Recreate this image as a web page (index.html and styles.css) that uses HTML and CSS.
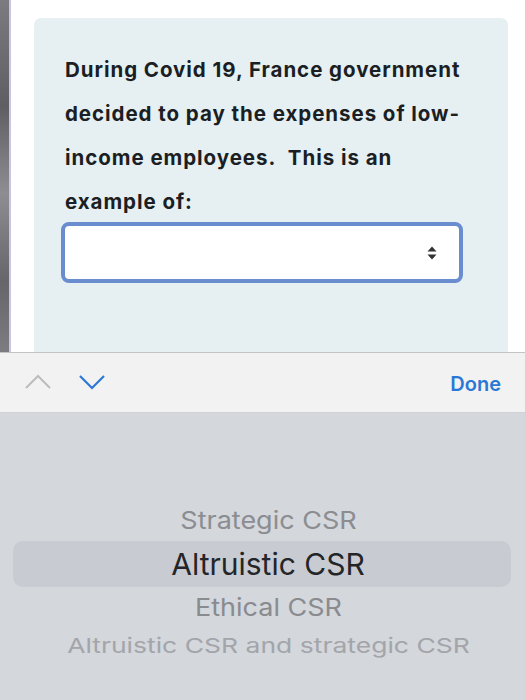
FILE: index.html
```html
<!DOCTYPE html>
<html>
<head>
<meta charset="utf-8">
<link rel="stylesheet" href="styles.css">
</head>
<body>
<div class="page">
  <div class="strip"></div>
  <div class="edge"></div>
  <div class="main">
    <div class="panel">
      <p class="question">During Covid 19, France government decided to pay the expenses of low-income employees.&nbsp; This is an example of:</p>
      <div class="select">
        <svg class="updown" width="10" height="14" viewBox="0 0 10 14"><path d="M5 0.5 L9.5 5.5 H0.5 Z M5 13.5 L9.5 8.5 H0.5 Z" fill="#333"/></svg>
      </div>
    </div>
  </div>
</div>
<div class="toolbar">
  <div class="arrows">
    <svg width="26" height="16" viewBox="0 0 26 16"><path d="M1 14 L13 2 L25 14" fill="none" stroke="#bcbcbc" stroke-width="2"/></svg>
    <svg width="26" height="16" viewBox="0 0 26 16"><path d="M1 2 L13 14 L25 2" fill="none" stroke="#2a78d6" stroke-width="2.2"/></svg>
  </div>
  <span class="done">Done</span>
</div>
<div class="picker">
  <div class="opt o1">Strategic CSR</div>
  <div class="opt sel">Altruistic CSR</div>
  <div class="opt o3">Ethical CSR</div>
  <div class="opt o4">Altruistic CSR and strategic CSR</div>
</div>
</body>
</html>
```
FILE: styles.css
```css
html, body {
  margin: 0;
  padding: 0;
  width: 525px;
  height: 700px;
  overflow: hidden;
  background: #fff;
  font-family: Inter, "Liberation Sans", Arial, sans-serif;
}
.page {
  display: flex;
  height: 352px;
  overflow: hidden;
}
.strip {
  width: 9px;
  background: linear-gradient(180deg, #7c7c80 0%, #5f5f63 30%, #8e8e92 55%, #66666a 80%, #7d7d81 100%);
}
.edge {
  width: 2px;
  background: #c9c6e2;
}
.main {
  flex: 1;
  padding: 18px 17px 0 23px;
}
.panel {
  background: #e6f0f3;
  border-radius: 7px 7px 0 0;
  height: 100%;
  padding: 30px 0 0 31px;
  box-sizing: border-box;
}
.question {
  margin: 0;
  width: 405px;
  font-size: 20.5px;
  letter-spacing: 0.95px;
  line-height: 44px;
  font-weight: 700;
  color: #1b1f24;
}
.select {
  margin-top: -2px;
  width: 402px;
  height: 61px;
  box-sizing: border-box;
  border: 4px solid #6a8dd0;
  border-radius: 8px;
  background: #fff;
  display: flex;
  align-items: center;
  justify-content: flex-end;
  padding-right: 22px;
  margin-left: -4px;
}
.toolbar {
  height: 61px;
  box-sizing: border-box;
  border-top: 1px solid #c4c4c6;
  border-bottom: 1px solid #cfd1d5;
  background: #f2f2f2;
  display: flex;
  align-items: center;
  justify-content: space-between;
  padding: 0 24px 0 25px;
}
.arrows {
  display: flex;
  gap: 28px;
  padding-bottom: 2px;
}
.done {
  color: #2a78d6;
  font-size: 20px;
  font-weight: 600;
  padding-top: 3px;
}
.picker {
  height: 287px;
  background: #d4d7dc;
  padding-top: 92px;
  box-sizing: border-box;
  display: flex;
  flex-direction: column;
  align-items: center;
}
.opt {
  text-align: center;
  white-space: nowrap;
  padding-left: 12px;
}
.o1 {
  font-size: 27px;
  line-height: 32px;
  color: #8b8d91;
  transform: scaleY(0.9);
}
.sel {
  align-self: stretch;
  margin: 4px 14px 0 13px;
  height: 46px;
  line-height: 46px;
  background: #c8cbd1;
  border-radius: 10px;
  font-size: 30px;
  color: #242528;
}
.o3 {
  font-size: 27px;
  line-height: 42px;
  color: #898b8f;
  transform: scaleY(0.9);
}
.o4 {
  font-size: 26.5px;
  line-height: 32px;
  color: #a3a5aa;
  transform: scaleY(0.78);
}
```
